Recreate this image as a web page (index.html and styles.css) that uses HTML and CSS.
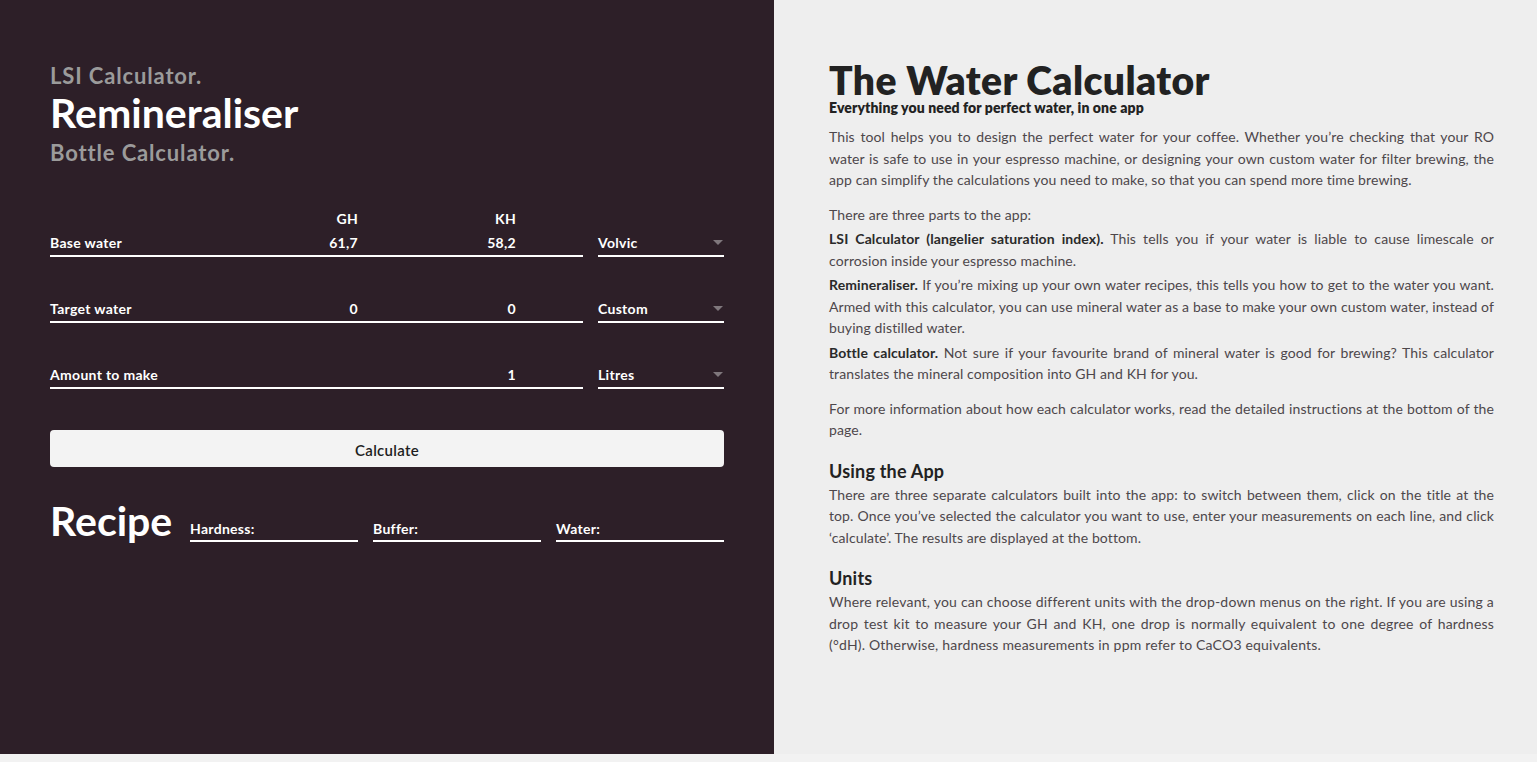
FILE: index.html
```html
<!DOCTYPE html>
<html>
<head>
<meta charset="utf-8">
<link rel="stylesheet" href="styles.css">
</head>
<body>
<div class="page">
  <section class="calc">
    <nav class="tabs">
      <div class="tab tab-small">LSI Calculator.</div>
      <div class="tab tab-active">Remineraliser</div>
      <div class="tab tab-small">Bottle Calculator.</div>
    </nav>

    <div class="form">
      <div class="row head">
        <div class="fields">
          <span></span><span class="num">GH</span><span class="num">KH</span><span></span>
        </div>
        <div></div>
      </div>
      <div class="row first">
        <div class="fields line">
          <span class="lbl">Base water</span><span class="num">61,7</span><span class="num">58,2</span><span></span>
        </div>
        <div class="select line"><span>Volvic</span><span class="caret"></span></div>
      </div>
      <div class="row">
        <div class="fields line">
          <span class="lbl">Target water</span><span class="num">0</span><span class="num">0</span><span></span>
        </div>
        <div class="select line"><span>Custom</span><span class="caret"></span></div>
      </div>
      <div class="row">
        <div class="fields line">
          <span class="lbl">Amount to make</span><span></span><span class="num">1</span><span></span>
        </div>
        <div class="select line"><span>Litres</span><span class="caret"></span></div>
      </div>
    </div>

    <button class="btn">Calculate</button>

    <div class="recipe">
      <h2>Recipe</h2>
      <div class="res line">Hardness:</div>
      <div class="res line">Buffer:</div>
      <div class="res line">Water:</div>
    </div>
  </section>

  <section class="info">
    <h1>The Water Calculator</h1>
    <p class="sub">Everything you need for perfect water, in one app</p>
    <p class="para">This tool helps you to design the perfect water for your coffee. Whether you’re checking that your RO water is safe to use in your espresso machine, or designing your own custom water for filter brewing, the app can simplify the calculations you need to make, so that you can spend more time brewing.</p>
    <p class="item">There are three parts to the app:</p>
    <p class="item"><b>LSI Calculator (langelier saturation index).</b> This tells you if your water is liable to cause limescale or corrosion inside your espresso machine.</p>
    <p class="item"><b>Remineraliser.</b> If you’re mixing up your own water recipes, this tells you how to get to the water you want. Armed with this calculator, you can use mineral water as a base to make your own custom water, instead of buying distilled water.</p>
    <p class="para"><b>Bottle calculator.</b> Not sure if your favourite brand of mineral water is good for brewing? This calculator translates the mineral composition into GH and KH for you.</p>
    <p class="para">For more information about how each calculator works, read the detailed instructions at the bottom of the page.</p>
    <h3>Using the App</h3>
    <p class="para">There are three separate calculators built into the app: to switch between them, click on the title at the top. Once you’ve selected the calculator you want to use, enter your measurements on each line, and click ‘calculate’. The results are displayed at the bottom.</p>
    <h3>Units</h3>
    <p class="para units">Where relevant, you can choose different units with the drop-down menus on the right. If you are using a drop test kit to measure your GH and KH, one drop is normally equivalent to one degree of hardness (°dH). Otherwise, hardness measurements in ppm refer to CaCO3 equivalents.</p>
  </section>
</div>
</body>
</html>
```

FILE: styles.css
```css
* { box-sizing: border-box; }
html, body { margin: 0; padding: 0; }
body {
  background: #f2f2f2;
  font-family: Lato, "Open Sans", sans-serif;
  height: 762px;
  overflow: hidden;
}
.page {
  display: flex;
  height: 754px;
}
.calc {
  width: 774px;
  flex: none;
  background: #2d1f28;
  padding: 65px 50px 0 50px;
  color: #fff;
}
.tabs { display: flex; flex-direction: column; }
.tab { font-weight: 700; line-height: 1; }
.tab-small { color: #9b9b9b; font-size: 22px; letter-spacing: 0.85px; }
.tab-active { color: #fff; font-size: 41px; margin: 5px 0 9px; }

.form { margin-top: 46px; }
.row {
  display: grid;
  grid-template-columns: 533px 126px;
  column-gap: 15px;
  height: 66px;
  align-items: end;
}
.row.head { height: 20px; align-items: start; }
.row.first { height: 27px; }
.fields {
  display: grid;
  grid-template-columns: 1fr 158px 158px 67px;
  font-size: 14px;
  letter-spacing: 0.3px;
  font-weight: 700;
  align-items: end;
}
.num { text-align: right; }
.line {
  border-bottom: 2px solid #fff;
  padding-bottom: 4px;
}
.select {
  display: flex;
  justify-content: space-between;
  align-items: center;
  font-size: 14px;
  letter-spacing: 0.3px;
  font-weight: 700;
}
.caret {
  width: 0; height: 0;
  border-left: 5px solid transparent;
  border-right: 5px solid transparent;
  border-top: 5px solid #7f777c;
  margin-right: 1px;
}
.btn {
  display: block;
  width: 674px;
  height: 37px;
  margin-top: 41px;
  border: none;
  border-radius: 4px;
  background: #f3f3f3;
  color: #1e1e1e;
  font-family: Lato, sans-serif;
  font-size: 15px;
  font-weight: 600;
  letter-spacing: 0.3px;
  padding: 2px 0 0;
}
.recipe {
  display: grid;
  grid-template-columns: 125px 168px 168px 168px;
  column-gap: 15px;
  align-items: end;
  margin-top: 33px;
}
.recipe h2 {
  margin: 0;
  font-size: 41px;
  font-weight: 700;
  line-height: 1;
  padding-bottom: 1px;
}
.res { font-size: 14px; letter-spacing: 0.3px; font-weight: 700; padding-bottom: 3px; }

.info {
  flex: 1;
  background: #eeeeee;
  padding: 58px 43px 0 55px;
  color: #4d474b;
  font-size: 14px;
  letter-spacing: 0.1px;
  line-height: 21.5px;
}
.info h1 {
  margin: 0;
  font-size: 39px;
  line-height: 44px;
  color: #222;
  font-weight: 800;
  letter-spacing: 0.4px;
}
.sub {
  margin: -3px 0 9px !important;
  font-weight: 800;
  color: #222;
  font-size: 14px;
  letter-spacing: 0.1px;
  line-height: 18px;
}
.info p { margin: 0; text-align: justify; }
.para { margin-bottom: 13px !important; }
.item { margin-bottom: 3px !important; }
.units { letter-spacing: 0.2px; }
.info b { color: #2a2a2a; font-weight: 700; }
.info h3 {
  margin: 19px 0 2px;
  font-size: 18px;
  font-weight: 700;
  color: #222;
  line-height: 22px;
  letter-spacing: 0.2px;
}
```
